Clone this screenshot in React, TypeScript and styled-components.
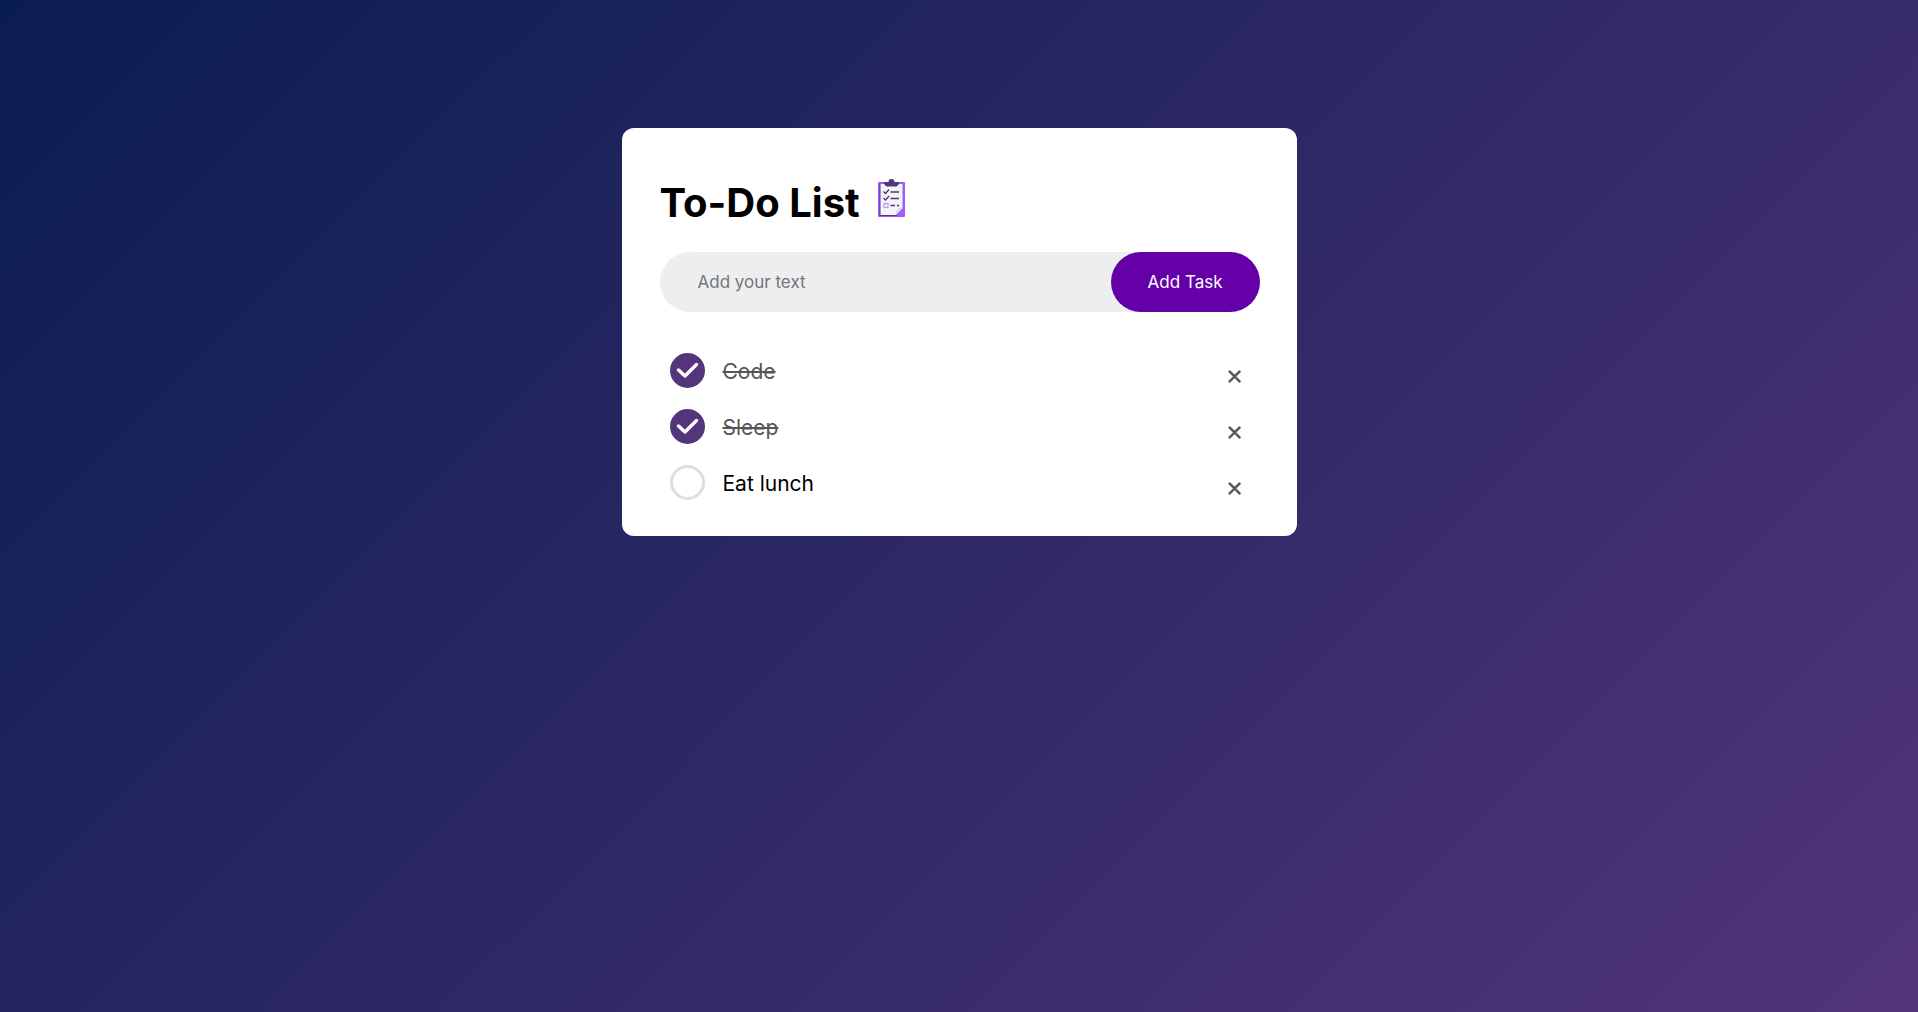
import React, { useState } from "react";
import styled, { createGlobalStyle } from "styled-components";

const GlobalStyle = createGlobalStyle`
  *, *::before, *::after { box-sizing: border-box; }
  body {
    margin: 0;
    font-family: Inter, "Liberation Sans", sans-serif;
  }
`;

const Page = styled.div`
  display: flex;
  flex-direction: column;
  align-items: center;
  min-height: 100vh;
  padding: 128px 12px 24px;
  background: linear-gradient(135deg, #0a1d51, #52347a);
`;

const Card = styled.main`
  width: 100%;
  max-width: 675px;
  padding: 51px 37px 26px 38px;
  border-radius: 12px;
  background: #fff;
`;

const Header = styled.header`
  display: flex;
  align-items: center;
  gap: 14px;
  margin-bottom: 25px;
`;

const Title = styled.h1`
  margin: 0;
  font-size: 40px;
  line-height: 48px;
  font-weight: 700;
  color: #000;
`;

const ClipboardArt = styled.svg`
  width: 34px;
  height: 40px;
  align-self: flex-start;
`;

const EntryForm = styled.form`
  display: flex;
  height: 60px;
  margin-bottom: 30px;
  border-radius: 30px;
  background: #edeef0;
`;

const EntryInput = styled.input`
  flex: 1;
  min-width: 0;
  padding: 0 12px 0 38px;
  border: 0;
  outline: 0;
  background: transparent;
  font: inherit;
  font-size: 17px;
  color: #000;

  &::placeholder { color: #757575; }
`;

const AddButton = styled.button`
  padding: 0 37px;
  border: 0;
  border-radius: 30px;
  background: #6500a8;
  color: #fff;
  font: inherit;
  font-size: 17px;
  cursor: pointer;
`;

const TaskList = styled.ul`
  margin: 0;
  padding: 0;
  list-style: none;
`;

const TaskRow = styled.li`
  display: flex;
  align-items: center;
  height: 56px;
  padding-left: 10px;
`;

const TaskLabel = styled.label`
  display: flex;
  flex: 1;
  align-items: center;
  gap: 18px;
  cursor: pointer;
`;

const TaskText = styled.span<{ $done: boolean }>`
  padding-top: 4px;
  font-size: 21px;
  line-height: 26px;
  color: ${(p) => (p.$done ? "#555" : "#000")};
  text-decoration: ${(p) => (p.$done ? "line-through" : "none")};
`;

const TickBox = styled.span`
  display: grid;
  width: 35px;
  height: 35px;

  > * { grid-area: 1 / 1; }
`;

const Tick = styled.input`
  appearance: none;
  width: 35px;
  height: 35px;
  margin: 0;
  border: 3px solid #dedede;
  border-radius: 50%;
  background: #fff;
  cursor: pointer;

  &:checked {
    border-color: #54357c;
    background: #54357c;
  }
`;

const TickMark = styled.svg`
  width: 35px;
  height: 35px;
  pointer-events: none;
`;

const RemoveButton = styled.button`
  width: 50px;
  height: 50px;
  padding: 8px 0 0;
  border: 0;
  background: transparent;
  color: #555;
  font: inherit;
  font-size: 28px;
  line-height: 40px;
  text-align: center;
  cursor: pointer;
`;

function Clipboard() {
  return (
    <ClipboardArt viewBox="0 0 34 40" aria-hidden="true">
      <rect x="4" y="3" width="27" height="35" rx="1" fill="#9b5cff" />
      <path d="M5.500 5h1.500v31h16v1H5.500z" fill="#54357c" />
      <path d="M6.500 5h22v24l-7 7h-15z" fill="#f4f3f7" />
      <path d="M22 36v-4l3-3h4z" fill="#dedce3" />
      <path d="M10 3h4.500a3 3 0 0 1 6 0H25v2L22.500 7.500h-10L10 5z" fill="#54357c" />
      <g fill="none" stroke="#54357c" strokeWidth="1.3">
        <path d="M9.500 12.500l2 2 3.500-4M16.500 13h8.500M9.500 19l2 2 3.500-4M16.500 19.500h8.500M16.500 26.500h4.500M23 26.500h2" />
      </g>
      <rect x="10" y="24.500" width="4" height="4" fill="none" stroke="#bd94ff" strokeWidth="1.2" />
    </ClipboardArt>
  );
}

type Task = { id: number; text: string; done: boolean };

const initialTasks: Task[] = [
  { id: 1, text: "Code", done: true },
  { id: 2, text: "Sleep", done: true },
  { id: 3, text: "Eat lunch", done: false },
];

export default function App() {
  const [tasks, setTasks] = useState(initialTasks);
  const [draft, setDraft] = useState("");

  const addTask = (event: React.FormEvent) => {
    event.preventDefault();
    const text = draft.trim();
    if (!text) return;
    setTasks([...tasks, { id: Date.now(), text, done: false }]);
    setDraft("");
  };

  const toggle = (id: number) =>
    setTasks(tasks.map((t) => (t.id === id ? { ...t, done: !t.done } : t)));

  return (
    <>
      <GlobalStyle />
      <Page>
        <Card>
          <Header>
            <Title>To-Do List</Title>
            <Clipboard />
          </Header>
          <EntryForm onSubmit={addTask}>
            <EntryInput
              type="text"
              aria-label="Add your text"
              placeholder="Add your text"
              value={draft}
              onChange={(e) => setDraft(e.target.value)}
            />
            <AddButton type="submit">Add Task</AddButton>
          </EntryForm>
          <TaskList>
            {tasks.map((task) => (
              <TaskRow key={task.id}>
                <TaskLabel>
                  <TickBox>
                    <Tick type="checkbox" checked={task.done} onChange={() => toggle(task.id)} />
                    {task.done && (
                      <TickMark viewBox="0 0 35 35" aria-hidden="true">
                        <path
                          d="M8.500 17l6.500 6L26.500 11.500"
                          fill="none"
                          stroke="#fff"
                          strokeWidth="3.4"
                          strokeLinecap="round"
                          strokeLinejoin="round"
                        />
                      </TickMark>
                    )}
                  </TickBox>
                  <TaskText $done={task.done}>{task.text}</TaskText>
                </TaskLabel>
                <RemoveButton
                  type="button"
                  aria-label={`Remove ${task.text}`}
                  onClick={() => setTasks(tasks.filter((t) => t.id !== task.id))}
                >
                  ×
                </RemoveButton>
              </TaskRow>
            ))}
          </TaskList>
        </Card>
      </Page>
    </>
  );
}
